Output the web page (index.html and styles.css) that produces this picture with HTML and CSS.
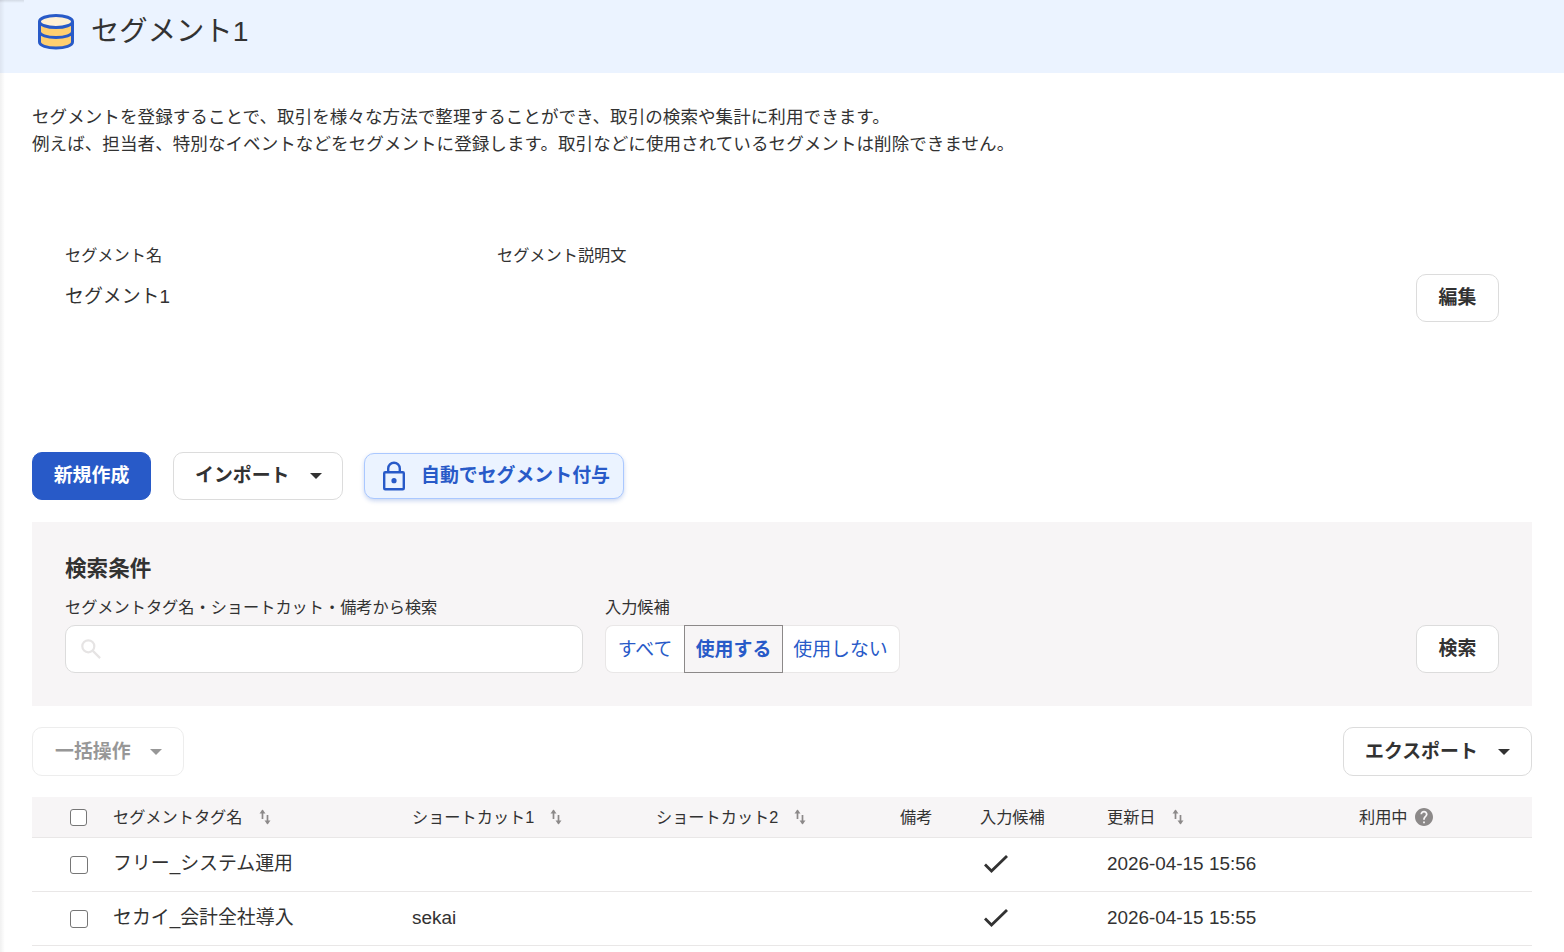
FILE: index.html
```html
<!DOCTYPE html>
<html lang="ja">
<head>
  <meta charset="UTF-8">
  <title>セグメント1</title>
  <link rel="stylesheet" href="styles.css">
</head>
<body>
  <div class="edge-shadow"></div>
  <div class="corner-shadow"></div>

  <header class="page-header">
    <svg class="db-icon" viewBox="0 0 38 38">
      <path d="M2.5 8v22c0 3.300 7.500 5.500 16.500 5.500s16.500-2.200 16.500-5.500V8z" fill="#ffcf70"/>
      <ellipse cx="19" cy="8.500" rx="16.500" ry="6" fill="#fff0d4"/>
      <g fill="none" stroke="#285ac8" stroke-width="3">
        <ellipse cx="19" cy="8.500" rx="16.500" ry="6"/>
        <path d="M2.500 8.500V29c0 3.500 7.500 6 16.500 6s16.500-2.500 16.500-6V8.500"/>
        <path d="M2.500 18.500c0 3.500 7.500 6 16.500 6s16.500-2.500 16.500-6"/>
      </g>
    </svg>
    <h1>セグメント1</h1>
  </header>

  <main class="content">
    <p class="description">セグメントを登録することで、取引を様々な方法で整理することができ、取引の検索や集計に利用できます。<br>例えば、担当者、特別なイベントなどをセグメントに登録します。取引などに使用されているセグメントは削除できません。</p>

    <section class="segment-info">
      <dl class="info-name">
        <dt>セグメント名</dt>
        <dd>セグメント1</dd>
      </dl>
      <dl class="info-note">
        <dt>セグメント説明文</dt>
        <dd></dd>
      </dl>
      <button class="btn">編集</button>
    </section>

    <div class="actions">
      <button class="btn btn-primary">新規作成</button>
      <button class="btn btn-menu">インポート<span class="caret"></span></button>
      <button class="btn btn-auto">
        <svg class="lock-icon" viewBox="0 0 24 30" fill="none" stroke="#285ac8" stroke-width="2.400">
          <rect x="2.200" y="11.200" width="19.600" height="17" rx="1"/>
          <path d="M6.200 11V7.500a5.800 5.800 0 0 1 11.600 0V11"/>
          <circle cx="12" cy="19.700" r="2.600" fill="#285ac8" stroke="none"/>
        </svg>
        自動でセグメント付与
      </button>
    </div>

    <section class="search-panel">
      <h2>検索条件</h2>
      <div class="search-row">
        <div class="field">
          <label for="keyword">セグメントタグ名・ショートカット・備考から検索</label>
          <div class="search-box">
            <svg class="search-icon" viewBox="0 0 20 20" fill="none" stroke="#e6e4e4" stroke-width="2.200">
              <circle cx="7.300" cy="7.300" r="6"/>
              <path d="M11.600 11.600l7.500 7.500"/>
            </svg>
            <input type="text" id="keyword">
          </div>
        </div>
        <div class="field">
          <label>入力候補</label>
          <div class="toggle">
            <button class="toggle-item toggle-all">すべて</button>
            <button class="toggle-item toggle-use active">使用する</button>
            <button class="toggle-item toggle-unuse">使用しない</button>
          </div>
        </div>
        <button class="btn btn-search">検索</button>
      </div>
    </section>

    <div class="table-tools">
      <button class="btn btn-menu btn-bulk" disabled>一括操作<span class="caret"></span></button>
      <button class="btn btn-menu">エクスポート<span class="caret"></span></button>
    </div>

    <table class="tag-table">
      <colgroup>
        <col class="col-check"><col class="col-name"><col class="col-short"><col class="col-short">
        <col class="col-memo"><col class="col-use"><col class="col-date"><col class="col-active">
      </colgroup>
      <thead>
        <tr>
          <th><input type="checkbox"></th>
          <th><span class="th-label">セグメントタグ名<svg class="sort-icon" viewBox="0 0 12 16"><use href="#sort"/></svg></span></th>
          <th><span class="th-label">ショートカット1<svg class="sort-icon" viewBox="0 0 12 16"><use href="#sort"/></svg></span></th>
          <th><span class="th-label">ショートカット2<svg class="sort-icon" viewBox="0 0 12 16"><use href="#sort"/></svg></span></th>
          <th>備考</th>
          <th>入力候補</th>
          <th><span class="th-label">更新日<svg class="sort-icon" viewBox="0 0 12 16"><use href="#sort"/></svg></span></th>
          <th><span class="th-label">利用中<svg class="help-icon" viewBox="2 2 20 20"><path fill="#8c8989" d="M12 2C6.480 2 2 6.480 2 12s4.480 10 10 10 10-4.480 10-10S17.520 2 12 2zm1 17h-2v-2h2v2zm2.070-7.750l-.9.920C13.450 12.900 13 13.500 13 15h-2v-.5c0-1.100.45-2.100 1.170-2.830l1.240-1.260c.37-.36.59-.86.59-1.410 0-1.100-.9-2-2-2s-2 .9-2 2H8c0-2.210 1.790-4 4-4s4 1.790 4 4c0 .88-.36 1.680-.93 2.250z"/></svg></span></th>
        </tr>
      </thead>
      <tbody>
        <tr>
          <td><input type="checkbox"></td>
          <td>フリー_システム運用</td>
          <td></td>
          <td></td>
          <td></td>
          <td><svg class="check-icon" viewBox="0 0 24 18"><path d="M1 9.500l6.500 6.500L23 1"/></svg></td>
          <td>2026-04-15 15:56</td>
          <td></td>
        </tr>
        <tr>
          <td><input type="checkbox"></td>
          <td>セカイ_会計全社導入</td>
          <td>sekai</td>
          <td></td>
          <td></td>
          <td><svg class="check-icon" viewBox="0 0 24 18"><path d="M1 9.500l6.500 6.500L23 1"/></svg></td>
          <td>2026-04-15 15:55</td>
          <td></td>
        </tr>
      </tbody>
    </table>
  </main>

  <svg class="defs">
    <symbol id="sort" viewBox="0 0 12 16">
      <path d="M3.500 10V1.500M8.500 6v8.500" fill="none" stroke="#8c8989" stroke-width="1.700"/>
      <path d="M0.500 4.500l3-4 3 4zM5.500 11.500l3 4 3-4z" fill="#8c8989"/>
    </symbol>
  </svg>
</body>
</html>
```

FILE: styles.css
```css
* {
  box-sizing: border-box;
  margin: 0;
  padding: 0;
}

body {
  font-family: "Liberation Sans", "Noto Sans CJK JP", sans-serif;
  font-size: 18.9px;
  color: #323232;
  background: #fff;
  height: 952px;
  overflow: hidden;
}

/* shadow cast by the side menu */
.edge-shadow {
  position: absolute;
  top: 0;
  left: 0;
  width: 5px;
  height: 100%;
  background: linear-gradient(90deg, rgba(0, 0, 0, 0.06), transparent);
}

.corner-shadow {
  position: absolute;
  top: 0;
  left: 0;
  width: 24px;
  height: 3px;
  background: linear-gradient(rgba(0, 0, 0, 0.1), transparent);
}

.page-header {
  display: flex;
  align-items: flex-start;
  height: 73px;
  padding: 13px 0 0 37px;
  background: #ebf3ff;
}

.db-icon {
  width: 38px;
  height: 38px;
}

.page-header h1 {
  margin-left: 16px;
  font-size: 28.35px;
  font-weight: 400;
  line-height: 36px;
}

.content {
  padding: 31px 32px 0;
}

.description {
  font-size: 17.55px;
  line-height: 27px;
  letter-spacing: 0.06px;
}

.segment-info {
  display: flex;
  height: 294px;
  padding: 83px 33px 0;
}

.info-name {
  width: 432px;
}

.info-note {
  flex: 1;
}

.segment-info dt {
  font-size: 16.2px;
  line-height: 28px;
}

.segment-info dd {
  margin-top: 14px;
  line-height: 28px;
}

.segment-info .btn {
  margin-top: 33px;
}

.btn {
  display: inline-flex;
  align-items: center;
  height: 48px;
  font-family: inherit;
  font-size: 18.9px;
  font-weight: 700;
  line-height: 28px;
  color: #323232;
  white-space: nowrap;
  background: #fff;
  border: 1px solid #dcdcdc;
  border-radius: 10px;
}

.segment-info .btn,
.btn-search {
  width: 83px;
  justify-content: center;
}

.btn-primary {
  width: 119px;
  justify-content: center;
  color: #fff;
  background: #285ac8;
  border-color: #285ac8;
}

.btn-menu {
  justify-content: space-between;
  padding: 0 20px 0 21px;
}

.caret {
  border: 6px solid transparent;
  border-top-color: #323232;
  border-bottom: none;
}

.actions {
  display: flex;
  align-items: center;
}

.actions .btn-menu {
  width: 170px;
  margin: 0 21px 0 22px;
}

.btn-auto {
  width: 260px;
  height: 46px;
  padding-left: 17px;
  color: #285ac8;
  background: #ebf3ff;
  border-color: #aac8ff;
  box-shadow: 0 2px 4px rgba(40, 90, 200, 0.25);
}

.lock-icon {
  width: 24px;
  height: 30px;
  margin-right: 15px;
}

.search-panel {
  height: 184px;
  margin-top: 22px;
  padding: 33px 33px 0;
  background: #f7f5f6;
}

.search-panel h2 {
  font-size: 21.6px;
  line-height: 28px;
}

.search-row {
  display: flex;
  align-items: flex-end;
  margin-top: 13px;
}

.field label {
  display: block;
  height: 29px;
  font-size: 16.2px;
  line-height: 22px;
}

.search-box {
  display: flex;
  align-items: center;
  width: 518px;
  height: 48px;
  margin-right: 22px;
  padding: 0 15px;
  background: #fff;
  border: 1px solid #dcdcdc;
  border-radius: 10px;
}

.search-icon {
  width: 20px;
  height: 20px;
}

.search-box input {
  flex: 1;
  height: 40px;
  border: none;
  outline: none;
  font-size: 18.9px;
}

.toggle {
  display: flex;
  height: 48px;
}

.toggle-item {
  padding-top: 1px;
  font-family: inherit;
  font-size: 18.9px;
  line-height: 28px;
  color: #285ac8;
  background: #fff;
  border: 1px solid #e9e7e7;
}

.toggle-all {
  width: 79px;
  border-right: none;
  border-radius: 8px 0 0 8px;
}

.toggle-use {
  width: 99px;
}

.toggle-unuse {
  width: 117px;
  padding-right: 1px;
  border-left: none;
  border-radius: 0 8px 8px 0;
}

.toggle-item.active {
  font-weight: 700;
  background: #f7f5f6;
  border-color: #8c8989;
}

.btn-search {
  margin-left: auto;
}

.table-tools {
  display: flex;
  justify-content: space-between;
  margin: 21px 0;
}

.table-tools .btn {
  width: 189px;
  height: 49px;
  padding-right: 21px;
}

.table-tools .btn-bulk {
  width: 152px;
  padding-left: 22px;
  color: #323232;
  opacity: 0.5;
}

.tag-table {
  width: 100%;
  table-layout: fixed;
  border-collapse: separate;
  border-spacing: 0;
}

.col-check { width: 81px; }
.col-name { width: 299px; }
.col-short { width: 244px; }
.col-memo { width: 80px; }
.col-use { width: 127px; }
.col-date { width: 252px; }
.col-active { width: 173px; }

.tag-table th,
.tag-table td {
  text-align: left;
  vertical-align: middle;
  white-space: nowrap;
  border-bottom: 1px solid #e9e7e7;
}

.tag-table th {
  height: 41px;
  font-size: 16.2px;
  font-weight: 400;
  line-height: 24px;
  background: #f7f5f6;
}

.tag-table td {
  height: 54px;
  padding-bottom: 2px;
  line-height: 28px;
}

.tag-table input {
  display: block;
  width: 17px;
  height: 17px;
  margin-left: 38px;
  appearance: none;
  background: #fff;
  border: 1.5px solid #767676;
  border-radius: 3px;
}

.tag-table td input {
  width: 18px;
  height: 18px;
  position: relative;
  top: 1px;
}

.th-label {
  display: inline-flex;
  align-items: center;
}

.sort-icon {
  width: 12px;
  height: 16px;
  margin-left: 16px;
}

.help-icon {
  width: 18px;
  height: 18px;
  margin-left: 7px;
}

.check-icon {
  display: block;
  width: 24px;
  height: 18px;
  margin-left: 4px;
  fill: none;
  stroke: #323232;
  stroke-width: 2.800;
}

.defs {
  display: none;
}
```
